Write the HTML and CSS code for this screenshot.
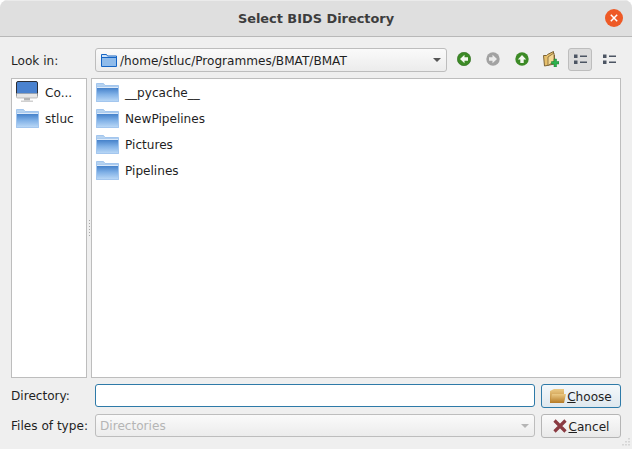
FILE: index.html
```html
<!DOCTYPE html>
<html lang="en">
<head>
<meta charset="utf-8">
<title>Select BIDS Directory</title>
<link rel="stylesheet" href="styles.css">
</head>
<body>
<svg class="defs" width="0" height="0">
  <defs>
    <linearGradient id="fb" x1="0" y1="0" x2="0" y2="1">
      <stop offset="0" stop-color="#3c7ac6"/><stop offset=".5" stop-color="#7fb0e6"/><stop offset="1" stop-color="#bcd9f7"/>
    </linearGradient>
    <symbol id="folder" viewBox="0 0 24 24">
      <path d="M.5 3.500h7l1.500 2h13.500v16H.5z" fill="#b5d2f0" stroke="#a3c6ee"/>
      <path d="M.5 7h22v14.500H.5z" fill="url(#fb)" stroke="#a3c6ee"/>
      <path d="M1 7.500h21" stroke="#dbe9f9"/>
    </symbol>
  </defs>
</svg>
<div class="dialog">
  <header class="titlebar">
    <span class="title">Select BIDS Directory</span>
    <span class="close"><svg width="18" height="18" viewBox="0 0 18 18"><circle cx="9" cy="9" r="9" fill="#ee5a26"/><path d="M5.800 5.800l6.400 6.400M12.200 5.800l-6.400 6.400" stroke="#fff" stroke-width="1.500"/></svg></span>
  </header>
  <main class="content">
    <div class="toolbar">
      <label class="label">Look in:</label>
      <div class="combo path">
        <svg class="path-icon" width="16" height="16" viewBox="0 0 16 16"><path d="M.5 2.500h5l1 1.500h9v10.500H.5z" fill="#cfe2f7" stroke="#1464c4"/><path d="M1 6h14v8H1z" fill="#8fbbea"/><path d="M1 5.500h14" stroke="#1464c4"/></svg>
        <span class="combo-text">/home/stluc/Programmes/BMAT/BMAT</span>
        <span class="arrow"></span>
      </div>
      <div class="tools">
        <span class="tool"><svg width="14" height="14" viewBox="0 0 14 14"><circle cx="7" cy="7" r="6.700" fill="#3c8a26"/><circle cx="7" cy="7" r="6.700" fill="none" stroke="#2a6a1a" stroke-width=".6"/><path d="M7.500 2.800L3 7l4.500 4.200V8.700H11V5.300H7.500z" fill="#f4f7f0"/></svg></span>
        <span class="tool"><svg width="14" height="14" viewBox="0 0 14 14"><circle cx="7" cy="7" r="6.700" fill="#a2a2a2"/><path d="M6.500 2.800L11 7l-4.500 4.200V8.700H3V5.300h3.500z" fill="#ececec"/></svg></span>
        <span class="tool"><svg width="14" height="14" viewBox="0 0 14 14"><circle cx="7" cy="7" r="6.700" fill="#3c8a26"/><path d="M2.800 7.500L7 3l4.200 4.500H8.700V11H5.300V7.500z" fill="#f4f7f0"/></svg></span>
        <span class="tool"><svg width="16" height="16" viewBox="0 0 16 16"><path d="M.5 4.500h3l1-1 6-3v3l1 .5v9l-10 2z" fill="#e6bf6c" stroke="#7d6436"/><path d="M5 6l6-4v8.500l-6 4z" fill="#f3d893" stroke="#7d6436" stroke-width=".8"/><path d="M8.500 10.500h2.500V8h2.500v2.500H16V13h-2.500v3H11v-3H8.500z" fill="#2cb24c" stroke="#1c7a32" stroke-width=".5"/></svg></span>
        <span class="tool tool-on"><svg width="13" height="11" viewBox="0 0 13 11"><path d="M0 .5h3.500V4H0zM0 6.500h3.500V10H0zM6 1.500h7V3H6zM6 7.500h7V9H6z" fill="#4c5563"/></svg></span>
        <span class="tool"><svg width="13" height="11" viewBox="0 0 13 11"><path d="M0 .5h3.500V4H0zM0 6.500h3.500V10H0zM6 1.500h7V3H6zM6 7.500h7V9H6z" fill="#4c5563"/></svg></span>
      </div>
    </div>
    <div class="panes">
      <ul class="list sidebar">
        <li class="item">
          <svg class="item-icon" width="24" height="24" viewBox="0 0 24 24"><rect x=".5" y="1.500" width="21" height="15" rx="1.500" fill="#4a82cf" stroke="#2c2f36"/><path d="M.5 13.500h21V17a1 1 0 0 1-1 1h-19a1 1 0 0 1-1-1z" fill="#e6e6e6" stroke="#9a9a9a" stroke-width=".6"/><rect x="8" y="18" width="6" height="2.500" fill="#b4b4b4"/><rect x="5" y="20.500" width="12" height="1.500" fill="#d0d0d0"/></svg>
          <span>Co...</span>
        </li>
        <li class="item"><svg class="item-icon" width="24" height="24"><use href="#folder"/></svg><span>stluc</span></li>
      </ul>
      <div class="splitter"><i></i><i></i><i></i><i></i><i></i><i></i></div>
      <ul class="list files">
        <li class="item"><svg class="item-icon" width="24" height="24"><use href="#folder"/></svg><span>__pycache__</span></li>
        <li class="item"><svg class="item-icon" width="24" height="24"><use href="#folder"/></svg><span>NewPipelines</span></li>
        <li class="item"><svg class="item-icon" width="24" height="24"><use href="#folder"/></svg><span>Pictures</span></li>
        <li class="item"><svg class="item-icon" width="24" height="24"><use href="#folder"/></svg><span>Pipelines</span></li>
      </ul>
    </div>
    <div class="form-row">
      <label class="label">Directory:</label>
      <div class="input"></div>
      <button class="btn btn-default" type="button">
        <svg width="16" height="16" viewBox="0 0 16 16"><defs><linearGradient id="oc" x1="0" y1="0" x2="0" y2="1"><stop offset="0" stop-color="#ecca85"/><stop offset="1" stop-color="#b57a25"/></linearGradient></defs><path d="M0 3l4-2h10v14H0z" fill="url(#oc)"/><path d="M2 6h14l-2 9H0z" fill="url(#oc)"/></svg>
        <span><u>C</u>hoose</span>
      </button>
    </div>
    <div class="form-row">
      <label class="label">Files of type:</label>
      <div class="combo disabled"><span class="combo-text">Directories</span><span class="arrow"></span></div>
      <button class="btn" type="button">
        <svg width="14" height="14" viewBox="0 0 14 14"><path d="M1.500 1.500L12.500 12.500M12.500 1.500L1.500 12.500" stroke="#8a3a42" stroke-width="3.200"/></svg>
        <span class="cancel-text"><u>C</u>ancel</span>
      </button>
    </div>
  </main>
  <svg class="grip" width="8" height="8" viewBox="0 0 8 8"><path d="M6 0h2v1.500H6zM3 3h2v1.500H3zM6 3h2v1.500H6zM0 6h2v1.500H0zM3 6h2v1.500H3zM6 6h2v1.500H6z" fill="#d6d6d6"/></svg>
</div>
</body>
</html>
```
FILE: styles.css
```css
* { box-sizing: border-box; }
html, body { margin: 0; height: 100%; background: #fff; }
body { font: 12.1px/16px "DejaVu Sans", sans-serif; color: #1f1f1f; overflow: hidden; }
.defs { position: absolute; }
.dialog { position: relative; width: 632px; height: 449px; background: #efefef; border-radius: 8px 8px 0 0; overflow: hidden; display: flex; flex-direction: column; }
.titlebar { height: 37px; flex: none; background: #dfdfdf; border-top: 1px solid #ebebeb; border-bottom: 1px solid #b8b8b8; display: flex; align-items: center; justify-content: center; position: relative; }
.title { font-weight: 700; font-size: 12.9px; color: #3d3d3d; }
.close { position: absolute; right: 9px; top: 8px; width: 18px; height: 18px; }
.content { flex: 1; padding: 11px; display: flex; flex-direction: column; }
.toolbar { display: flex; align-items: center; height: 24px; }
.label { width: 84px; flex: none; padding-top: 2px; }
.combo { height: 24px; border: 1px solid #bdbdbd; border-radius: 3px; background: linear-gradient(#fafafa, #ececec); display: flex; align-items: center; position: relative; }
.path { width: 352px; flex: none; padding-left: 5px; gap: 3px; }
.path-icon { flex: none; }
.combo-text { flex: 1; white-space: nowrap; padding-top: 2px; }
.disabled .combo-text { padding-top: 0; }
.arrow { flex: none; width: 0; height: 0; border: 4px solid transparent; border-top: 4px solid #555; border-bottom: 0; margin-right: 5px; }
.tools { display: flex; align-items: flex-start; margin-left: 5px; gap: 5px; height: 24px; }
.tool { width: 24px; height: 23px; padding-bottom: 1px; flex: none; display: flex; align-items: center; justify-content: center; border: 1px solid transparent; border-radius: 3px; }
.tool-on { background: #dcdcdc; border-color: #bdbdbd; }
.panes { display: flex; height: 300px; margin-top: 6px; }
.list { list-style: none; margin: 0; padding: 0; background: #fff; border: 1px solid #bdbdbd; }
.sidebar { width: 76px; flex: none; }
.files { flex: 1; }
.item { height: 26px; display: flex; align-items: center; padding-left: 4px; }
.item span { padding-top: 2px; }
.item-icon { flex: none; margin-right: 5px; }
.splitter { width: 4px; flex: none; display: flex; flex-direction: column; align-items: center; justify-content: center; gap: 2px; }
.splitter i { width: 1px; height: 1px; background: #a9a9a9; }
.form-row { display: flex; align-items: flex-start; height: 24px; margin-top: 6px; }
.form-row .label { line-height: 23px; padding-top: 1px; }
.input { width: 440px; height: 23px; background: #fff; border: 1px solid #2e7aa8; border-radius: 3px; }
.form-row .combo { width: 440px; height: 23px; }
.disabled { color: #b5b5b5; padding-left: 4px; }
.disabled .arrow { border-top-color: #b5b5b5; }
.btn { margin-left: 6px; width: 80px; height: 24px; padding: 0; font: inherit; color: inherit; border: 1px solid #b5b5b5; border-radius: 3px; background: linear-gradient(#fafafa, #e9e9e9); display: flex; align-items: center; justify-content: center; gap: 1px; }
.btn span { padding-top: 2px; }
.btn-default { border-color: #2e7aa8; background: linear-gradient(#f4f8fb, #dfe8ee); }
.cancel-text { margin-left: 1px; }
.grip { position: absolute; right: 2px; bottom: 3px; }
```
